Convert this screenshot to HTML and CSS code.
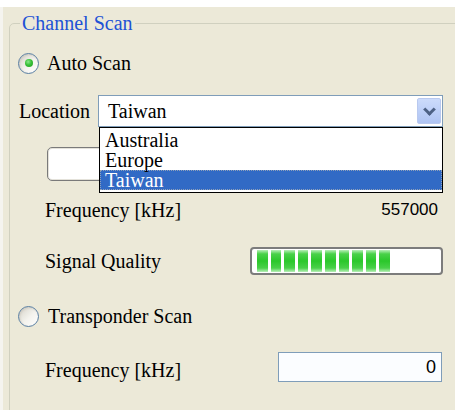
FILE: index.html
```html
<!DOCTYPE html>
<html>
<head>
<meta charset="utf-8">
<link rel="stylesheet" href="styles.css">
</head>
<body>
<div class="panel">
  <fieldset class="group">
    <legend class="title">Channel Scan</legend>

    <div class="row radio-row auto-row">
      <span class="radio checked"></span>
      <span class="txt">Auto Scan</span>
    </div>

    <div class="row location-row">
      <span class="txt loc-label">Location</span>
      <div class="combo">
        <span class="txt combo-text">Taiwan</span>
        <span class="combo-btn"><span class="chev"></span></span>
        <ul class="dropdown">
          <li class="opt">Australia</li>
          <li class="opt">Europe</li>
          <li class="opt selected">Taiwan</li>
        </ul>
      </div>
    </div>

    <div class="under-box"></div>

    <div class="row indent freq-row">
      <span class="txt">Frequency [kHz]</span>
      <span class="num">557000</span>
    </div>

    <div class="row indent signal-row">
      <span class="txt">Signal Quality</span>
      <div class="progress">
        <span class="blk"></span><span class="blk"></span><span class="blk"></span><span class="blk"></span><span class="blk"></span>
        <span class="blk"></span><span class="blk"></span><span class="blk"></span><span class="blk"></span><span class="blk"></span>
      </div>
    </div>

    <div class="row radio-row transp-row">
      <span class="radio"></span>
      <span class="txt">Transponder Scan</span>
    </div>

    <div class="row indent freq2-row">
      <span class="txt f2-label">Frequency [kHz]</span>
      <div class="input">0</div>
    </div>
  </fieldset>
</div>
</body>
</html>
```

FILE: styles.css
```css
body {
  margin: 0;
  background: #ffffff;
  font-size: 20px;
  color: #000;
}
.txt, .title, .opt {
  font-family: "Liberation Serif", "Times New Roman", serif;
}
.panel {
  margin-top: 7px;
  height: 403px;
  background: #ECE9D8;
  border-left: 3px solid #F5F4EF;
  box-sizing: border-box;
  overflow: hidden;
}
.group {
  margin: 4px -20px 0 6px;
  padding: 0 31px 0 7px;
  border: 1px solid #D0D0BF;
  border-radius: 5px;
  min-width: 0;
  height: 430px;
  box-sizing: border-box;
}
.title {
  margin-left: 3px;
  padding: 0 2px;
  line-height: 24px;
  color: #2152D6;
}
.row {
  display: flex;
  align-items: center;
}
.indent {
  padding-left: 28px;
}
.radio-row {
  height: 24px;
  line-height: 24px;
}
.auto-row {
  margin-top: 16px;
}
.radio {
  width: 19px;
  height: 19px;
  margin-left: 1px;
  margin-right: 8px;
  border-radius: 50%;
  border: 1px solid #5A7FA3;
  background: linear-gradient(135deg, #D6D3C9 0%, #F4F3EE 55%, #FFFFFF 100%);
  box-shadow: inset 1px 1px 2px #CFCCC2;
  display: flex;
  align-items: center;
  justify-content: center;
  flex: none;
}
.radio.checked::after {
  content: "";
  width: 8px;
  height: 8px;
  border-radius: 50%;
  background: radial-gradient(circle at 40% 35%, #8BE68B 0%, #39C139 45%, #1E9A1E 100%);
}
.transp-row {
  margin-top: 29px;
}
.transp-row .radio {
  margin-right: 9px;
}
.location-row {
  margin-top: 20px;
  height: 32px;
  line-height: 32px;
}
.loc-label {
  width: 81px;
  padding-left: 2px;
  box-sizing: border-box;
  flex: none;
}
.combo {
  position: relative;
  flex: 1;
  height: 32px;
  box-sizing: border-box;
  border: 1px solid #7F9DB9;
  background: #fff;
  display: flex;
  align-items: center;
  padding: 1px 1px 1px 0;
}
.combo-text {
  flex: 1;
  padding-left: 9px;
  line-height: 28px;
}
.combo-btn {
  width: 24px;
  height: 26px;
  border: 1px solid #B9C9EF;
  border-radius: 2px;
  box-sizing: border-box;
  background: linear-gradient(to bottom, #CCDBFB 0%, #BACDF7 60%, #AFC4F3 100%);
  display: flex;
  align-items: center;
  justify-content: center;
}
.chev {
  width: 6px;
  height: 6px;
  border-right: 3px solid #4D6185;
  border-bottom: 3px solid #4D6185;
  transform: translateY(-2px) rotate(45deg);
}
.dropdown {
  position: absolute;
  left: 0;
  right: -1px;
  top: 31px;
  margin: 0;
  padding: 2px 0;
  list-style: none;
  border: 1px solid #000;
  background: #fff;
  z-index: 5;
}
.opt {
  height: 20px;
  line-height: 20px;
  padding-left: 5px;
}
.opt.selected {
  background: #316AC5;
  color: #fff;
  outline: 1px dotted #8FA0B8;
  outline-offset: -1px;
}
.under-box {
  margin: 20px 0 0 30px;
  width: 260px;
  height: 34px;
  box-sizing: border-box;
  border: 1px solid #7A7A7A;
  border-radius: 5px;
  background: #fff;
  box-shadow: inset 0 0 0 1px #E4E2DA;
}
.freq-row {
  margin-top: 17px;
  height: 24px;
  line-height: 24px;
  justify-content: space-between;
}
.num {
  font-family: "Liberation Sans", Arial, sans-serif;
  font-size: 17px;
  padding-right: 5px;
}
.signal-row {
  margin-top: 25px;
  height: 28px;
  line-height: 28px;
}
.progress {
  margin-left: auto;
  width: 193px;
  height: 28px;
  box-sizing: border-box;
  border: 2px solid #7C7C7C;
  border-radius: 4px;
  background: #fff;
  padding: 1px 5px;
  display: flex;
  gap: 3px;
}
.blk {
  width: 10.6px;
  height: 22px;
  flex: none;
  background: linear-gradient(to bottom, #B9EFB9 0%, #49D149 18%, #2BC72B 50%, #49D149 82%, #B9EFB9 100%);
}
.freq2-row {
  margin-top: 24px;
  height: 30px;
  align-items: flex-start;
}
.f2-label {
  line-height: 24px;
  margin-top: 6px;
}
.input {
  margin-left: auto;
  margin-right: 1px;
  width: 164px;
  height: 30px;
  box-sizing: border-box;
  border: 1px solid #7F9DB9;
  background: #FBFDFF;
  text-align: right;
  padding-right: 5px;
  font-family: "Liberation Sans", Arial, sans-serif;
  font-size: 18px;
  line-height: 28px;
}
```
